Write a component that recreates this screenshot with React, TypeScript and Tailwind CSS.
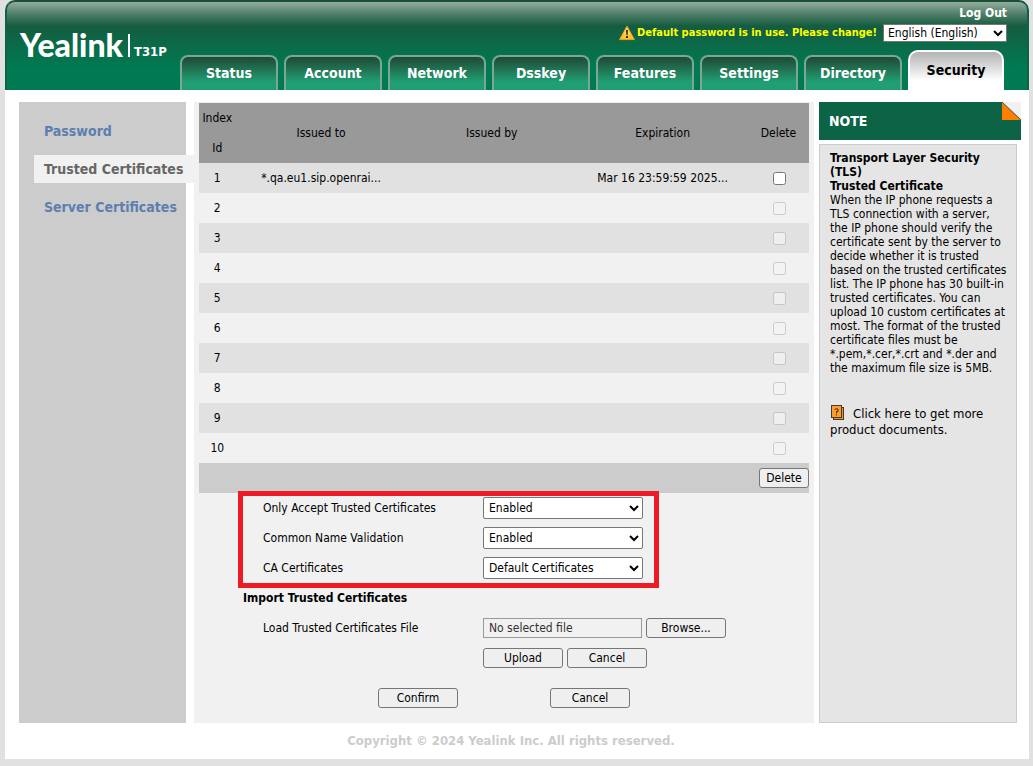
import { useState } from 'react';

const TABS = ['Status', 'Account', 'Network', 'Dsskey', 'Features', 'Settings', 'Directory', 'Security'];

const MENU = ['Password', 'Trusted Certificates', 'Server Certificates'];

const CERTIFICATES = [
  { id: 1, issuedTo: '*.qa.eu1.sip.openrai...', issuedBy: '', expiration: 'Mar 16 23:59:59 2025...' },
  ...Array.from({ length: 9 }, (_, i) => ({ id: i + 2, issuedTo: '', issuedBy: '', expiration: '' })),
];

const SETTINGS = [
  { id: 'only-accept', label: 'Only Accept Trusted Certificates', options: ['Enabled', 'Disabled'] },
  { id: 'common-name', label: 'Common Name Validation', options: ['Enabled', 'Disabled'] },
  {
    id: 'ca-certificates',
    label: 'CA Certificates',
    options: ['Default Certificates', 'Custom Certificates', 'All Certificates'],
  },
];

function WarningIcon() {
  return (
    <svg width="16" height="16" viewBox="0 0 16 16" aria-hidden="true">
      <path d="M8 1.2 15.4 14.6H.6Z" fill="#fcc233" stroke="#f3a21c" strokeWidth="1" strokeLinejoin="round" />
      <path d="M8 2.6 12 9.5H4Z" fill="#ffe08a" opacity=".6" />
      <path d="M7 5h2l-.4 5H7.4ZM7 11h2v2H7Z" fill="#3a2a10" />
    </svg>
  );
}

function DocsIcon() {
  return (
    <svg className="ml-px mr-2 inline-block align-[-2px]" width="14" height="15" viewBox="0 0 14 15" aria-hidden="true">
      <rect x="2.5" y="2.5" width="10" height="12" fill="#e8912a" stroke="#4a3a2a" />
      <rect x=".5" y=".5" width="10" height="12" fill="#ff9c2e" stroke="#4a3a2a" />
      <path d="M4 4.5V4h3v2.5H5.500V8.500M5.500 9.500v1" fill="none" stroke="#3a2a1a" />
    </svg>
  );
}

function Button({ children, className = 'w-20' }: { children: string; className?: string }) {
  return (
    <button
      type="button"
      className={`h-5 rounded-[3px] border border-[#767676] bg-[#efefef] text-center leading-4 hover:bg-[#e5e5e5] ${className}`}
    >
      {children}
    </button>
  );
}

function Header() {
  return (
    <header className="flex h-[90px] justify-between rounded-t-[10px] border-x-2 border-t-2 border-x-[#0d6345] border-t-[#1a4f38] bg-[linear-gradient(to_bottom,#93ac9f_0px,#4f7f68_12px,#155c40_24px,#0b6b49_44px,#007a52_66px,#007a52_88px)]">
      <div className="flex items-start pl-[13px] pt-[25px] text-white">
        <span className="font-[Lato,sans-serif] text-[32px] font-black leading-9">Yealink</span>
        <span className="ml-[5px] mt-[7px] h-[23px] w-0.5 bg-white" />
        <span className="ml-1 mt-[17px] text-[13px] font-bold leading-4">T31P</span>
      </div>

      <div className="flex flex-col items-end justify-between pt-[3px]">
        <div className="flex flex-col items-end gap-[3px] pr-5">
          <a href="#logout" className="text-xs font-bold leading-4 text-white">
            Log Out
          </a>
          <div className="flex h-[18px] items-center gap-0.5">
            <WarningIcon />
            <span className="mr-1 text-[11px] font-bold text-[#ffff00]">
              Default password is in use. Please change!
            </span>
            <select aria-label="Language" className="h-[18px] w-[124px] border border-[#767676] bg-white text-xs leading-4">
              <option>English (English)</option>
            </select>
          </div>
        </div>

        <nav className="flex items-end gap-1.5 pr-[23px]">
          {TABS.map((tab) =>
            tab === 'Security' ? (
              <a
                key={tab}
                href="#security"
                aria-current="page"
                className="flex h-10 w-24 items-center justify-center rounded-t-[10px] border-x-2 border-t-2 border-white bg-linear-to-b from-[#b4b4b4] to-white to-75% pb-0.5 text-sm font-bold"
              >
                {tab}
              </a>
            ) : (
              <a
                key={tab}
                href={`#${tab.toLowerCase()}`}
                className="flex h-[35px] w-[98px] items-center justify-center rounded-t-[8px] border-x-2 border-t-2 border-[#7ba795] bg-linear-to-b from-[#1d4a35] to-[#209e74] to-75% pb-0.5 text-sm font-bold text-white"
              >
                {tab}
              </a>
            ),
          )}
        </nav>
      </div>
    </header>
  );
}

function Sidebar() {
  return (
    <nav className="flex w-[167px] shrink-0 flex-col gap-2.5 bg-[#cccccc] pl-[15px] pt-[15px]">
      {MENU.map((item) => (
        <a
          key={item}
          href={`#${item.toLowerCase().replace(' ', '-')}`}
          className={`-mr-2 whitespace-nowrap pl-2.5 text-sm font-bold leading-7 ${
            item === 'Trusted Certificates' ? 'bg-[#f1f1f1] text-[#666666]' : 'text-[#5c7fb0]'
          }`}
        >
          {item}
        </a>
      ))}
    </nav>
  );
}

function CertificateTable() {
  const [selected, setSelected] = useState<number[]>([]);

  const toggle = (id: number) =>
    setSelected((prev) => (prev.includes(id) ? prev.filter((x) => x !== id) : [...prev, id]));

  return (
    <table className="w-full table-fixed border-collapse text-center leading-[30px]">
      <thead className="bg-[#999999]">
        <tr>
          <th className="w-[6%] font-normal">
            Index
            <br />
            Id
          </th>
          <th className="w-[28%] font-normal">Issued to</th>
          <th className="w-[28%] font-normal">Issued by</th>
          <th className="w-[28%] font-normal">Expiration</th>
          <th className="w-[10%] font-normal">Delete</th>
        </tr>
      </thead>
      <tbody>
        {CERTIFICATES.map((cert) => (
          <tr key={cert.id} className="h-[30px] odd:bg-[#e1e1e1]">
            <td>{cert.id}</td>
            <td className="whitespace-nowrap">{cert.issuedTo}</td>
            <td>{cert.issuedBy}</td>
            <td className="whitespace-nowrap">{cert.expiration}</td>
            <td>
              <input
                type="checkbox"
                aria-label={`Delete certificate ${cert.id}`}
                disabled={!cert.issuedTo}
                checked={selected.includes(cert.id)}
                onChange={() => toggle(cert.id)}
                className="ml-0.5 block size-[13px] justify-self-center"
              />
            </td>
          </tr>
        ))}
      </tbody>
      <tfoot className="bg-[#cccccc]">
        <tr>
          <td colSpan={5} className="h-[30px]">
            <div className="flex justify-end">
              <Button className="w-[50px]">Delete</Button>
            </div>
          </td>
        </tr>
      </tfoot>
    </table>
  );
}

function SettingsForm() {
  return (
    <form className="pl-11">
      <div className="relative">
        {SETTINGS.map((row) => (
          <div key={row.id} className="flex h-[30px] items-center pl-5">
            <label htmlFor={row.id} className="w-[220px]">
              {row.label}
            </label>
            <select id={row.id} className="h-[22px] w-40 rounded-xs border border-[#767676] bg-white px-px">
              {row.options.map((option) => (
                <option key={option}>{option}</option>
              ))}
            </select>
          </div>
        ))}
        <div className="pointer-events-none absolute -bottom-[5px] -left-[5px] -top-0.5 w-[421px] border-[5px] border-[#ed1c24]" />
      </div>

      <h2 className="font-bold leading-[30px]">Import Trusted Certificates</h2>
      <div className="flex h-[30px] items-center pl-5">
        <label htmlFor="cert-file" className="w-[220px]">
          Load Trusted Certificates File
        </label>
        <input
          id="cert-file"
          type="text"
          readOnly
          defaultValue="No selected file"
          className="mr-1 h-5 w-[159px] border border-[#999999] px-[5px] text-[#333333]"
        />
        <Button>Browse...</Button>
      </div>
      <div className="flex h-[30px] items-center gap-1 pl-60">
        <Button>Upload</Button>
        <Button>Cancel</Button>
      </div>
    </form>
  );
}

function NotePanel() {
  return (
    <aside className="flex w-[202px] shrink-0 flex-col gap-1">
      <div className="flex h-[38px] items-center justify-between bg-[#0d6345] pl-2.5">
        <h2 className="text-sm font-bold text-white">NOTE</h2>
        <svg className="self-start" width="20" height="18" viewBox="0 0 20 18" aria-hidden="true">
          <path d="M1 0H20V18Z" fill="#f1f1f1" />
          <path d="M1 0V18H20Z" fill="#ff7e00" />
          <path d="M1 0 20 18" stroke="#555" strokeWidth="1" />
        </svg>
      </div>
      <div className="mr-1 grow border border-[#cccccc] bg-[#e5e5e5] pl-2.5 pr-1.5 pt-1.5 leading-[14px]">
        <h3 className="text-[12px] font-bold">Transport Layer Security (TLS)</h3>
        <h3 className="text-[12px] font-bold">Trusted Certificate</h3>
        <p>
          When the IP phone requests a TLS connection with a server, the IP phone should verify the certificate sent by
          the server to decide whether it is trusted based on the trusted certificates list. The IP phone has 30
          built-in trusted certificates. You can upload 10 custom certificates at most. The format of the trusted
          certificate files must be *.pem,*.cer,*.crt and *.der and the maximum file size is 5MB.
        </p>
        <a href="#documents" className="mt-[30px] block text-[13px] leading-4">
          <DocsIcon />
          Click here to get more product documents.
        </a>
      </div>
    </aside>
  );
}

export default function App() {
  return (
    <div className="min-h-screen bg-[#e1e1e1] pl-[5px] pr-1 font-['DejaVu_Sans_Condensed','DejaVu_Sans',sans-serif] text-xs text-black">
      <div className="rounded-t-[10px] bg-white">
        <Header />
        <div className="flex pl-3.5 pr-2 pt-3">
          <Sidebar />
          <main className="ml-2 mr-[5px] min-w-0 grow bg-[#f1f1f1] px-[5px] pb-2.5 pt-px">
            <CertificateTable />
            <SettingsForm />
            <div className="mt-2.5 flex h-[30px] items-center justify-center gap-[92px]">
              <Button>Confirm</Button>
              <Button>Cancel</Button>
            </div>
          </main>
          <NotePanel />
        </div>
        <footer className="pr-3 text-center text-[13px] font-bold leading-9 text-[#cccccc]">
          Copyright © 2024 Yealink Inc. All rights reserved.
        </footer>
      </div>
    </div>
  );
}
